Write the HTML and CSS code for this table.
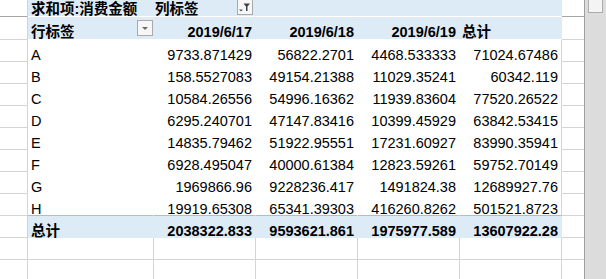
FILE: index.html
```html
<!DOCTYPE html>
<html lang="zh-CN">
<head>
<meta charset="utf-8">
<title>数据透视表</title>
<link rel="stylesheet" href="styles.css">
</head>
<body>
<div class="window">
  <div class="sheet">
    <!-- row 1 -->
    <div class="c g0 frz"></div>
    <div class="c hd r1 b"><span>求和项:消费金额</span></div>
    <div class="c hd r1 b col-lbl"><span>列标签</span>
      <div class="btn filter-btn">
        <svg width="14" height="14" viewBox="0 0 14 14"><path d="M1 9.5h4l-2 2z" fill="#595959"/><path d="M5.5 3.5h6.5l-2.5 3v4.5h-1.5v-4.5z" fill="#404040"/></svg>
      </div>
    </div>
    <div class="c hd r1"></div>
    <div class="c hd r1"></div>
    <div class="c hd r1"></div>
    <div class="c g6 frz"></div>

    <!-- row 2 -->
    <div class="c g0"></div>
    <div class="c hd r2 b"><span>行标签</span>
      <div class="btn drop-btn">
        <svg width="14" height="14" viewBox="0 0 14 14"><path d="M4 6h6l-3 3z" fill="#6b6b6b"/></svg>
      </div>
    </div>
    <div class="c hd r2 b num"><span>2019/6/17</span></div>
    <div class="c hd r2 b num"><span>2019/6/18</span></div>
    <div class="c hd r2 b num"><span>2019/6/19</span></div>
    <div class="c hd r2 b tot-lbl"><span>总计</span></div>
    <div class="c g6"></div>

    <!-- A -->
    <div class="c g0"></div>
    <div class="c dt"><span>A</span></div>
    <div class="c dt num"><span>9733.871429</span></div>
    <div class="c dt num"><span>56822.2701</span></div>
    <div class="c dt num"><span>4468.533333</span></div>
    <div class="c dt num edge"><span>71024.67486</span></div>
    <div class="c g6"></div>

    <!-- B -->
    <div class="c g0"></div>
    <div class="c dt"><span>B</span></div>
    <div class="c dt num"><span>158.5527083</span></div>
    <div class="c dt num"><span>49154.21388</span></div>
    <div class="c dt num"><span>11029.35241</span></div>
    <div class="c dt num edge"><span>60342.119</span></div>
    <div class="c g6"></div>

    <!-- C -->
    <div class="c g0"></div>
    <div class="c dt"><span>C</span></div>
    <div class="c dt num"><span>10584.26556</span></div>
    <div class="c dt num"><span>54996.16362</span></div>
    <div class="c dt num"><span>11939.83604</span></div>
    <div class="c dt num edge"><span>77520.26522</span></div>
    <div class="c g6"></div>

    <!-- D -->
    <div class="c g0"></div>
    <div class="c dt"><span>D</span></div>
    <div class="c dt num"><span>6295.240701</span></div>
    <div class="c dt num"><span>47147.83416</span></div>
    <div class="c dt num"><span>10399.45929</span></div>
    <div class="c dt num edge"><span>63842.53415</span></div>
    <div class="c g6"></div>

    <!-- E -->
    <div class="c g0"></div>
    <div class="c dt"><span>E</span></div>
    <div class="c dt num"><span>14835.79462</span></div>
    <div class="c dt num"><span>51922.95551</span></div>
    <div class="c dt num"><span>17231.60927</span></div>
    <div class="c dt num edge"><span>83990.35941</span></div>
    <div class="c g6"></div>

    <!-- F -->
    <div class="c g0"></div>
    <div class="c dt"><span>F</span></div>
    <div class="c dt num"><span>6928.495047</span></div>
    <div class="c dt num"><span>40000.61384</span></div>
    <div class="c dt num"><span>12823.59261</span></div>
    <div class="c dt num edge"><span>59752.70149</span></div>
    <div class="c g6"></div>

    <!-- G -->
    <div class="c g0"></div>
    <div class="c dt"><span>G</span></div>
    <div class="c dt num"><span>1969866.96</span></div>
    <div class="c dt num"><span>9228236.417</span></div>
    <div class="c dt num"><span>1491824.38</span></div>
    <div class="c dt num edge"><span>12689927.76</span></div>
    <div class="c g6"></div>

    <!-- H -->
    <div class="c g0"></div>
    <div class="c dt hline"><span>H</span></div>
    <div class="c dt num hline"><span>19919.65308</span></div>
    <div class="c dt num hline"><span>65341.39303</span></div>
    <div class="c dt num hline"><span>416260.8262</span></div>
    <div class="c dt num edge hline"><span>501521.8723</span></div>
    <div class="c g6"></div>

    <!-- total -->
    <div class="c g0"></div>
    <div class="c tot b"><span>总计</span></div>
    <div class="c tot b num"><span>2038322.833</span></div>
    <div class="c tot b num"><span>9593621.861</span></div>
    <div class="c tot b num"><span>1975977.589</span></div>
    <div class="c tot b num"><span>13607922.28</span></div>
    <div class="c g6"></div>

    <!-- blank rows -->
    <div class="c g0"></div>
    <div class="c e"></div>
    <div class="c e"></div>
    <div class="c e"></div>
    <div class="c e"></div>
    <div class="c e"></div>
    <div class="c g6"></div>

    <div class="c g0"></div>
    <div class="c e"></div>
    <div class="c e"></div>
    <div class="c e"></div>
    <div class="c e"></div>
    <div class="c e"></div>
    <div class="c g6"></div>
  </div>
  <div class="vscroll">
    <div class="thumb"></div>
  </div>
</div>
</body>
</html>
```

FILE: styles.css
```css
html, body {
  margin: 0;
  padding: 0;
  background: #ffffff;
}

body {
  width: 606px;
  height: 279px;
  overflow: hidden;
  font-family: "Liberation Sans", "Noto Sans CJK SC", sans-serif;
  font-size: 14.5px;
  color: #000000;
}

.window {
  display: flex;
  width: 606px;
  height: 279px;
}

.sheet {
  display: grid;
  grid-template-columns: 28px 126px 102px 102px 102px 102px 22px;
  grid-template-rows: 17px 23px repeat(10, 22px) 22px;
  width: 584px;
  height: 279px;
  overflow: hidden;
}

.c {
  box-sizing: border-box;
  position: relative;
  display: flex;
  align-items: flex-end;
  border-right: 1px solid #d4d4d4;
  border-bottom: 1px solid #d4d4d4;
  padding: 0 3px;
  white-space: nowrap;
  background: #ffffff;
}

.c span {
  line-height: 16px;
  margin-bottom: -2px;
}

.b { font-weight: bold; }

.num { justify-content: flex-end; }

.g0, .g6 { background: #ffffff; }
.g6 { border-right: none; }
.frz { border-bottom-color: #a6a6a6; }

.hd {
  background: #ddebf7;
  border-right-color: #ddebf7;
  border-bottom-color: #ffffff;
}
.r1 span { margin-bottom: -1px; }
.r2 span { margin-bottom: -1px; }
.col-lbl { padding-left: 1px; }
.tot-lbl { padding-left: 2px; }

.dt {
  border-right-color: #ffffff;
  border-bottom-color: #ffffff;
}
.dt.edge { border-right-color: #d4d4d4; }
.dt.hline { border-bottom-color: #9bc2e6; }

.tot {
  background: #ddebf7;
  border-right-color: #ddebf7;
  border-bottom-color: #ddebf7;
}

.btn {
  position: absolute;
  box-sizing: border-box;
  width: 16px;
  height: 16px;
  border: 1px solid #a9a9a9;
  background: #f7f7f7;
  display: flex;
  align-items: center;
  justify-content: center;
}
.drop-btn { right: 0; top: 3px; }
.filter-btn { left: 83px; top: -1px; }

.vscroll {
  box-sizing: border-box;
  width: 22px;
  height: 279px;
  border-left: 1px solid #a0a0a0;
  background: #dcdcdc;
  padding: 0 3px;
}

.thumb {
  box-sizing: border-box;
  width: 15px;
  height: 13px;
  border: 1px solid #ababab;
  border-top: none;
  background: #f4f4f4;
}
```
